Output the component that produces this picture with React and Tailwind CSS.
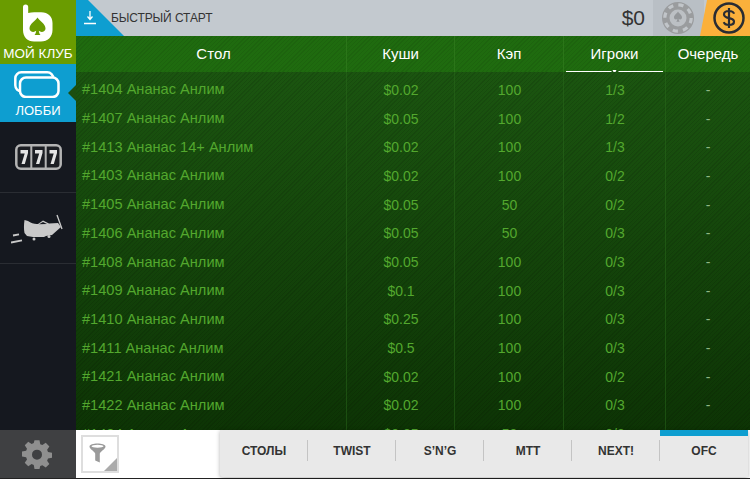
import React from 'react';

const rows = [
  ['#1404 Ананас Анлим', '$0.02', '100', '1/3'],
  ['#1407 Ананас Анлим', '$0.05', '100', '1/2'],
  ['#1413 Ананас 14+ Анлим', '$0.02', '100', '1/3'],
  ['#1403 Ананас Анлим', '$0.02', '100', '0/2'],
  ['#1405 Ананас Анлим', '$0.05', '50', '0/2'],
  ['#1406 Ананас Анлим', '$0.05', '50', '0/3'],
  ['#1408 Ананас Анлим', '$0.05', '100', '0/3'],
  ['#1409 Ананас Анлим', '$0.1', '100', '0/3'],
  ['#1410 Ананас Анлим', '$0.25', '100', '0/3'],
  ['#1411 Ананас Анлим', '$0.5', '100', '0/3'],
  ['#1421 Ананас Анлим', '$0.02', '100', '0/2'],
  ['#1422 Ананас Анлим', '$0.02', '100', '0/3'],
  ['#1424 Ананас Анлим', '$0.05', '50', '0/3'],
];

const tabs = ['СТОЛЫ', 'TWIST', 'S’N’G', 'MTT', 'NEXT!', 'OFC'];

const colClass = 'grid grid-cols-[271px_108px_109px_102px_84px]';

const LogoIcon = () => (
  <svg width="30" height="38" viewBox="0 0 30 38" className="-ml-[1px]">
    <path d="M0 3a2.600 2.600 0 0 1 5.200 0v6c2-.6 4-.8 6-.8h7C25 8.200 29.500 12.500 29.500 19v7c0 7-5 11.500-11.500 11.500h-7C4.500 37.500 0 33 0 26z" fill="#fff" />
    <path d="M14.500 13.500c2 3.200 8 6.300 8 11 0 3.400-4.500 4.500-6.700 2.300.2 2 .8 3.200 1.700 4.200h-6c.9-1 1.500-2.200 1.700-4.200-2.200 2.200-6.700 1.100-6.700-2.300 0-4.700 6-7.800 8-11z" fill="#6a9c00" />
  </svg>
);

const LobbyIcon = () => (
  <svg width="46" height="27" viewBox="0 0 46 27" fill="none" stroke="#fff" strokeWidth="2.500" className="-ml-[3px]">
    <rect x="1.300" y="1.300" width="38" height="19" rx="6" />
    <rect x="6" y="6.500" width="38.500" height="19.500" rx="6" fill="#0e9ed0" />
  </svg>
);

const SlotIcon = () => (
  <svg width="47" height="26" viewBox="0 0 47 26">
    <rect x="1.300" y="1.300" width="44.400" height="23.400" rx="4.500" fill="#1c1e23" stroke="#b4b4b4" strokeWidth="2.500" />
    <path d="M16.300 2v22M30.700 2v22" stroke="#b4b4b4" strokeWidth="2" />
    <path d="M5.500 6h7.500v3L9.800 20H6.500l3.200-10.500H5.500zM20 6h7.500v3L24.300 20H21l3.200-10.500H20zM34.500 6H42v3L38.800 20h-3.300l3.200-10.500h-4.200z" fill="#e4e4e4" />
  </svg>
);

const PlaneIcon = () => (
  <svg width="54" height="34" viewBox="1 -4 54 34">
    <path d="M14.500 5l3.500 1c3 2 7 3.500 10 3l5-3.500 6 3 9-.5 3 4-9 8-6 1-2 1H23l-6-1-2.500-3c-.7-4-.7-8 0-13z" fill="#c9c9c9" />
    <path d="M29 9.300l4-2.200 4 2z" fill="#15181f" />
    <path d="M47 0l5 14" fill="none" stroke="#c9c9c9" strokeWidth="1.300" />
    <circle cx="24" cy="24" r="1.500" fill="#c9c9c9" />
    <circle cx="39" cy="21.500" r="1.500" fill="#c9c9c9" />
    <path d="M3 20.500l6-1.200M1 27.500l11-2.200" stroke="#c9c9c9" strokeWidth="1.800" />
  </svg>
);

const ChipIcon = () => (
  <svg width="34" height="34" viewBox="0 0 34 34">
    <circle cx="17" cy="17" r="16" fill="#9a9c9e" />
    <circle cx="17" cy="17" r="13.200" fill="none" stroke="#c1c5c9" strokeWidth="3.200" strokeDasharray="5.180 5.180" />
    <circle cx="17" cy="17" r="10.800" fill="#9a9c9e" />
    <circle cx="17" cy="17" r="8.500" fill="#bcc0c4" />
    <path d="M17 10.500c1 2 4 3.500 4 6 0 2-2.300 2.500-3.400 1.200.1 1.300.5 2.300 1.100 3h-3.400c.6-.7 1-1.700 1.100-3-1.100 1.300-3.400.8-3.400-1.200 0-2.500 3-4 4-6z" fill="#94979a" />
  </svg>
);

const DollarIcon = () => (
  <svg width="32" height="32" viewBox="0 0 32 32" fill="none" stroke="#2a2c33">
    <circle cx="16" cy="16" r="14.500" strokeWidth="2.500" />
    <path d="M21 11.800c-.5-1.800-2.500-2.800-5-2.800-2.800 0-5 1.300-5 3.500 0 4.800 10 2.500 10 7 0 2.200-2.200 3.500-5 3.500-2.600 0-4.600-1-5.200-2.800M16 6v20" strokeWidth="2.200" />
  </svg>
);

const GearIcon = () => (
  <svg width="30" height="30" viewBox="0 0 24 24" fill="#8f8f8f">
    <path fillRule="evenodd" d="M10 1h4l.6 3.100 1.700.7L19 3l2.900 2.900-1.800 2.700.7 1.700L24 11v4l-3.200.6-.7 1.700 1.800 2.700-2.900 2.700-2.700-1.800-1.700.7L14 24h-4l-.6-3.300-1.700-.7L5 21.800 2.200 19l1.800-2.700-.7-1.700L0 14v-4l3.300-.6.7-1.700L2.200 5 5 2.200l2.700 1.700 1.700-.7zM12 8.500a4 4 0 1 0 0 8 4 4 0 0 0 0-8z" />
  </svg>
);

const App = () => {
  return (
    <div className="w-[750px] h-[479px] flex overflow-hidden bg-[#111] font-['Liberation_Sans',Arial,sans-serif]">
      {/* Sidebar */}
      <div className="w-[76px] flex flex-col bg-[#15181f]">
        <div className="h-16 bg-[#6a9c00] flex flex-col items-center pt-[4px]">
          <LogoIcon />
          <span className="text-white text-[13.5px] leading-[17px] mt-[3px] whitespace-nowrap">МОЙ КЛУБ</span>
        </div>
        <div className="relative h-[58px] bg-[#0e9ed0] flex flex-col items-center pt-[7px]">
          <LobbyIcon />
          <span className="text-white text-[13px] leading-[15px] mt-[5px]">ЛОББИ</span>
          <div className="absolute right-0 top-[21px] border-y-[8px] border-y-transparent border-r-[8px] border-r-[#1c4f10]" />
        </div>
        <div className="h-[71px] flex items-center justify-center border-b border-[#2a2d33]">
          <SlotIcon />
        </div>
        <div className="h-[71px] flex items-center justify-center border-b border-[#2a2d33]">
          <PlaneIcon />
        </div>
        <div className="flex-1" />
        <div className="h-[48px] bg-[#3f4042] flex items-center justify-center pr-[3px]">
          <GearIcon />
        </div>
        <div className="h-px bg-[#222]" />
      </div>

      {/* Main */}
      <div className="flex-1 flex flex-col min-w-0">
        {/* Top bar */}
        <div className="relative h-9 bg-[#c3c9cf] flex items-center">
          <div className="absolute left-0 top-0 w-[48px] h-9 bg-[#0e9ed0] [clip-path:polygon(0_0,12px_0,100%_100%,0_100%)]" />
          <svg className="absolute left-[7px] top-[10px]" width="14" height="15" viewBox="0 0 14 15" fill="none" stroke="#fff" strokeWidth="1.300">
            <path d="M7 1v8M4.500 6.500L7 9.500l2.500-3M1 13.500h12" />
          </svg>
          <span className="ml-[35px] text-[12px] text-[#333] tracking-[-0.1px]">БЫСТРЫЙ СТАРТ</span>
          <span className="ml-auto mr-[8px] text-[21px] text-[#333]">$0</span>
          <div className="w-[51px] h-9 bg-[#b9bfc5] flex items-center pl-[8px]">
            <ChipIcon />
          </div>
          <div className="w-[50px] h-9 -ml-[4px] bg-[#fbb03b] flex items-center justify-center pl-[8px] [clip-path:polygon(7px_0,100%_0,100%_100%,0_100%)]">
            <DollarIcon />
          </div>
        </div>

        {/* Table header */}
        <div className={`${colClass} h-9 text-white text-[15px] bg-[#1f6b0f] bg-[repeating-linear-gradient(135deg,rgba(0,0,0,0.07)_0,rgba(0,0,0,0.07)_1px,transparent_1px,transparent_3px)]`}>
          {['Стол', 'Куши', 'Кэп', 'Игроки', 'Очередь'].map((title, i) => (
            <div key={title} className={`relative flex items-center justify-center ${i < 4 ? 'border-r border-[#2b7519]' : ''} ${i === 0 ? 'pl-[5px]' : ''}`}>
              {title}
              {title === 'Игроки' && (
                <div className="absolute left-[2px] right-[2px] bottom-0 h-px bg-white">
                  <div className="absolute left-1/2 -translate-x-1/2 -bottom-[3px] w-[7px] h-[5px] bg-[#1c5a10] flex justify-center">
                    <div className="border-x-[2.500px] border-x-transparent border-t-[4px] border-t-white" />
                  </div>
                </div>
              )}
            </div>
          ))}
        </div>

        {/* Table body */}
        <div className="relative flex-1 overflow-hidden pt-[4px] bg-[repeating-linear-gradient(135deg,rgba(0,0,0,0.1)_0,rgba(0,0,0,0.1)_1px,transparent_1px,transparent_3px),linear-gradient(#1b5510,#0d3405)]">
          <div className={`${colClass} absolute inset-0 pointer-events-none`}>
            <div className="border-r border-[#2a6a1c]/50" />
            <div className="border-r border-[#2a6a1c]/50" />
            <div className="border-r border-[#2a6a1c]/50" />
            <div className="border-r border-[#2a6a1c]/50" />
          </div>
          {rows.map((row) => (
            <div key={row[0]} className={`${colClass} h-[28.7px] items-center text-[14px] text-[#53a82e]`}>
              <div className="pl-[6px] whitespace-nowrap text-[14.6px]">{row[0]}</div>
              <div className="text-center">{row[1]}</div>
              <div className="text-center">{row[2]}</div>
              <div className="text-center">{row[3]}</div>
              <div className="text-center text-[#8fb884]">-</div>
            </div>
          ))}
        </div>

        {/* Bottom bar */}
        <div className="relative h-[48px] bg-white flex items-center">
          <div className="relative ml-[5px] w-[38px] h-[38px] border-2 border-[#dedede] flex items-center justify-center bg-white">
            <svg width="17" height="20" viewBox="0 0 17 20" className="-mt-[3px] -ml-[5px]">
              <path d="M.5 3.500c0-4 16-4 16 0C16.500 6 12 8 10.800 10.500V19.500L6.200 17.500v-7C5 8 .5 6 .5 3.500z" fill="#9a9a9a" />
              <ellipse cx="8.500" cy="3.300" rx="6" ry="1.500" fill="#fff" />
            </svg>
            <div className="absolute right-0 bottom-0 border-l-[13px] border-l-transparent border-b-[13px] border-b-[#ababab]" />
          </div>
          <div className="absolute left-[144px] top-0 w-[528px] h-[47px] bg-[#e9e9e9] rounded-bl-[3px] shadow-[0_1px_4px_rgba(0,0,0,0.3)] grid grid-cols-6">
            {tabs.map((tab, i) => (
              <div key={tab} className="relative flex items-center justify-center text-[12px] font-bold text-[#333]">
                {i === 5 && <div className="absolute left-0 right-0 top-0 h-[6px] bg-[#0e9ed0]" />}
                {i < 5 && <div className="absolute right-0 top-[10px] h-[21px] w-px bg-[#c4c4c4]" />}
                <span className="-translate-y-[3px]">{tab}</span>
              </div>
            ))}
          </div>
        </div>
        <div className="h-px bg-[#222]" />
      </div>
    </div>
  );
};

export default App;
